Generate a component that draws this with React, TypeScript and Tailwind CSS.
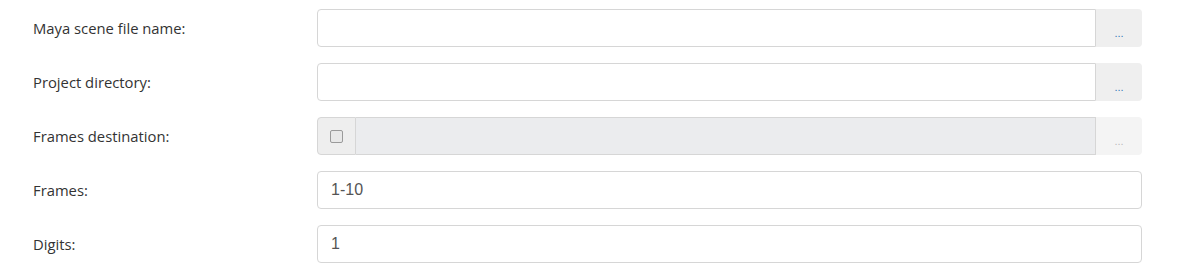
const rows: { label: string; value?: string; kind: "browse" | "check" | "text" }[] = [
  { label: "Maya scene file name:", kind: "browse" },
  { label: "Project directory:", kind: "browse" },
  { label: "Frames destination:", kind: "check" },
  { label: "Frames:", value: "1-10", kind: "text" },
  { label: "Digits:", value: "1", kind: "text" },
];

const labelFont = { fontFamily: '"Open Sans", "Noto Sans", sans-serif' };

export default function App() {
  return (
    <div className="flex h-[268px] w-[1182px] flex-col gap-4 bg-white pt-[9px] pl-[33px]">
      {rows.map((r) => (
        <div key={r.label} className="flex h-[38px] items-center">
          <label
            className="w-[284px] shrink-0 text-[14.8px] text-[#333]"
            style={labelFont}
          >
            {r.label}
          </label>
          <Field row={r} />
        </div>
      ))}
    </div>
  );
}

function Field({ row }: { row: (typeof rows)[number] }) {
  if (row.kind === "text") {
    return (
      <div className="flex h-[38px] w-[825px] items-center rounded-[4px] border border-[#d6d6d6] bg-white px-[13px] font-['Liberation_Sans',Arial,sans-serif] text-[16px] text-[#555]">
        {row.value}
      </div>
    );
  }
  if (row.kind === "check") {
    return (
      <div className="flex h-[38px] w-[825px]">
        <div className="flex w-[39px] items-center justify-center rounded-l-[4px] border border-[#d6d6d6] bg-[#eee]">
          <span className="h-[13px] w-[13px] rounded-[2px] border border-[#9a9a9a] bg-[#e8e8e8]" />
        </div>
        <div className="flex-1 border-y border-r border-[#d6d6d6] bg-[#ebecee]" />
        <button className="flex w-[46px] items-center justify-center rounded-r-[4px] bg-[#f4f4f4] pt-[10px] font-['Liberation_Sans',Arial,sans-serif] text-[11px] text-[#bbb]">
          ...
        </button>
      </div>
    );
  }
  return (
    <div className="flex h-[38px] w-[825px]">
      <div className="flex-1 rounded-l-[4px] border border-[#d6d6d6] bg-white" />
      <button className="flex w-[46px] items-center justify-center rounded-r-[4px] bg-[#efefef] pt-[10px] font-['Liberation_Sans',Arial,sans-serif] text-[11px] text-[#337ab7]">
        ...
      </button>
    </div>
  );
}
